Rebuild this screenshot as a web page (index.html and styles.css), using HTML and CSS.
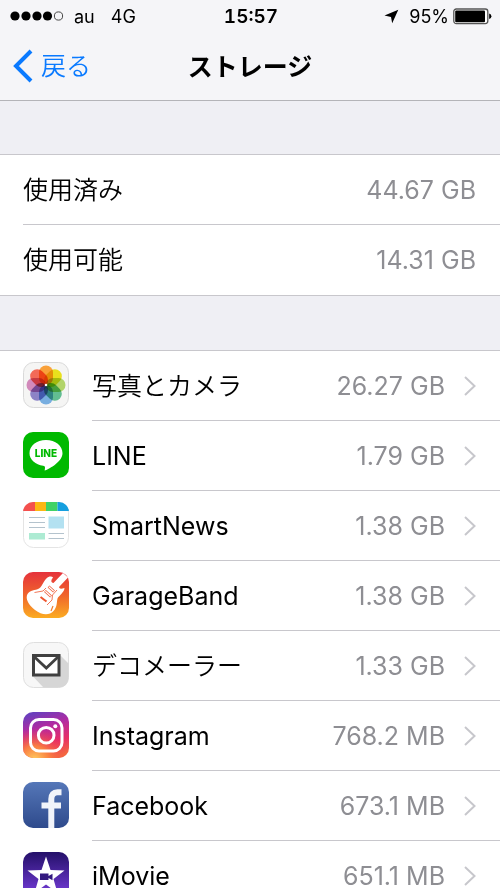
FILE: index.html
```html
<!DOCTYPE html>
<html lang="ja">
<head>
  <meta charset="UTF-8">
  <meta name="viewport" content="width=device-width, initial-scale=1.0">
  <title>ストレージ</title>
  <link rel="stylesheet" href="styles.css">
</head>
<body>

  <header class="header">
    <div class="status-bar">
      <div class="status-left">
        <svg class="signal" width="54" height="10" viewBox="0 0 54 10">
          <circle cx="5" cy="5" r="4.6"/>
          <circle cx="16" cy="5" r="4.6"/>
          <circle cx="27" cy="5" r="4.6"/>
          <circle cx="37.500" cy="5" r="4.6"/>
          <circle cx="48.500" cy="5" r="4.100" fill="none" stroke="#333" stroke-width="0.900"/>
        </svg>
        <span>au</span>
        <span>4G</span>
      </div>
      <div class="status-time">15:57</div>
      <div class="status-right">
        <svg width="15" height="15" viewBox="0 0 15 15">
          <path d="M14.300 0.700 L0.500 6.600 L7 7.900 L8.200 14.300 Z"/>
        </svg>
        <span>95%</span>
        <svg class="battery" width="39" height="17" viewBox="0 0 39 17">
          <rect x="0.800" y="1" width="34" height="14.600" rx="2.500" fill="#fff" stroke="#555" stroke-width="1.300"/>
          <rect x="2.200" y="2.400" width="29.800" height="11.800" rx="1"/>
          <path d="M36.200 5.500 Q38.400 6 38.400 8.300 Q38.400 10.600 36.200 11.100 Z"/>
        </svg>
      </div>
    </div>
    <nav class="nav-bar">
      <a href="#" class="back">
        <svg width="20" height="34" viewBox="0 0 20 34">
          <path d="M18 2 L3 17 L18 32" fill="none" stroke="#0a7aff" stroke-width="4"/>
        </svg>
        <span class="ja">戻る</span>
      </a>
      <h1 class="title">ストレージ</h1>
    </nav>
  </header>

  <main>
    <ul class="list summary">
      <li class="row"><span class="name ja">使用済み</span><span class="size">44.67 GB</span></li>
      <li class="row"><span class="name ja">使用可能</span><span class="size">14.31 GB</span></li>
    </ul>

    <ul class="list apps">
      <li>
        <a href="#" class="app">
          <svg class="icon" viewBox="0 0 46 46">
            <rect x="0.500" y="0.500" width="45" height="45" rx="10" fill="#f5f5f4" stroke="#d9d9d9"/>
            <g class="petals">
              <rect x="16" y="3.500" width="14" height="19.500" rx="7" fill="#f9a13a"/>
              <rect x="16" y="3.500" width="14" height="19.500" rx="7" fill="#e9e01d" transform="rotate(45 23 23)"/>
              <rect x="16" y="3.500" width="14" height="19.500" rx="7" fill="#b2d46a" transform="rotate(90 23 23)"/>
              <rect x="16" y="3.500" width="14" height="19.500" rx="7" fill="#62bd91" transform="rotate(135 23 23)"/>
              <rect x="16" y="3.500" width="14" height="19.500" rx="7" fill="#78aee0" transform="rotate(180 23 23)"/>
              <rect x="16" y="3.500" width="14" height="19.500" rx="7" fill="#8c83c6" transform="rotate(225 23 23)"/>
              <rect x="16" y="3.500" width="14" height="19.500" rx="7" fill="#d28abb" transform="rotate(270 23 23)"/>
              <rect x="16" y="3.500" width="14" height="19.500" rx="7" fill="#f36a58" transform="rotate(315 23 23)"/>
            </g>
            <circle cx="23" cy="23" r="1.300" fill="#fff"/>
          </svg>
          <span class="app-body"><span class="name ja">写真とカメラ</span><span class="size">26.27 GB</span><svg class="chevron" viewBox="0 0 14 22"><path d="M2 2 L11.500 11 L2 20"/></svg></span>
        </a>
      </li>
      <li>
        <a href="#" class="app">
          <svg class="icon" viewBox="0 0 46 46">
            <rect width="46" height="46" rx="10" fill="#00b900"/>
            <path d="M23 8 C13.500 8 6.500 13.800 6.500 21.200 C6.500 27.800 12.500 32.700 20.200 33.700 C22.300 34.200 22.300 35.200 21.600 38.600 C27 36.500 39.500 29.500 39.500 21.200 C39.500 13.800 32.500 8 23 8 Z" fill="#fff"/>
            <text x="23" y="25" class="line-text">LINE</text>
          </svg>
          <span class="app-body"><span class="name">LINE</span><span class="size">1.79 GB</span><svg class="chevron" viewBox="0 0 14 22"><path d="M2 2 L11.500 11 L2 20"/></svg></span>
        </a>
      </li>
      <li>
        <a href="#" class="app">
          <svg class="icon" viewBox="0 0 46 46">
            <defs>
              <clipPath id="round"><rect width="46" height="46" rx="10"/></clipPath>
            </defs>
            <rect x="0.500" y="0.500" width="45" height="45" rx="10" fill="#fff" stroke="#e4e4e4"/>
            <g clip-path="url(#round)">
              <rect width="12" height="9" fill="#f4504e"/>
              <rect x="12" width="11" height="9" fill="#fdb714"/>
              <rect x="23" width="11.500" height="9" fill="#41d266"/>
              <rect x="34.500" width="11.500" height="9" fill="#159fdf"/>
            </g>
            <path d="M6 15.500 H22 M6 20.500 H22 M6 25.500 H22 M25.500 31.500 H41 M25.500 36.500 H41" stroke="#b4c3cd" stroke-width="1"/>
            <rect x="25.500" y="14.500" width="15.500" height="12" fill="#b3e1f1"/>
            <rect x="6" y="31" width="16" height="6.500" fill="#adebd3"/>
          </svg>
          <span class="app-body"><span class="name">SmartNews</span><span class="size">1.38 GB</span><svg class="chevron" viewBox="0 0 14 22"><path d="M2 2 L11.500 11 L2 20"/></svg></span>
        </a>
      </li>
      <li>
        <a href="#" class="app">
          <svg class="icon" viewBox="0 0 46 46">
            <defs>
              <linearGradient id="garage" x1="0" y1="0" x2="0" y2="1">
                <stop offset="0" stop-color="#e5323c"/>
                <stop offset="0.500" stop-color="#f0642c"/>
                <stop offset="1" stop-color="#fbac22"/>
              </linearGradient>
            </defs>
            <rect width="46" height="46" rx="10" fill="url(#garage)"/>
            <path d="M40 1 L45 5.500 L36 15 C36.500 17.500 39 16.500 41.500 16 C41.500 20 36 23.500 34.500 26.500 C33.500 30 34.500 35 30.500 39 C26 44 18.500 43 12 38 C5.500 33 2 26.500 4.500 22 C7 18 12 18.500 16 16.500 C20 14.500 20.500 6.500 26.500 4.500 C27.500 4.300 29.500 4.500 30 5.500 C28 8 27.500 10.500 30.500 11 Z" fill="#fff"/>
            <path d="M11.500 20.500 L20 19 L23 16 M24 33 L29 28 L29.500 23 L34 18" fill="none" stroke="#ee5630" stroke-width="0.800"/>
            <path d="M17.500 25 L23.500 29.500" stroke="#ee5630" stroke-width="2"/>
            <path d="M22 19 L28 24.500 M25.500 14.500 L31 19.500" stroke="#ee5630" stroke-width="2.600"/>
            <path d="M22.300 19.300 L27.700 24.200 M25.800 14.800 L30.700 19.200" stroke="#fff" stroke-width="1.200"/>
            <path d="M28 39 L30 34" stroke="#f27c2b" stroke-width="1.200"/>
          </svg>
          <span class="app-body"><span class="name">GarageBand</span><span class="size">1.38 GB</span><svg class="chevron" viewBox="0 0 14 22"><path d="M2 2 L11.500 11 L2 20"/></svg></span>
        </a>
      </li>
      <li>
        <a href="#" class="app">
          <svg class="icon" viewBox="0 0 46 46">
            <rect x="0.500" y="0.500" width="45" height="45" rx="10" fill="#f7f7f7" stroke="#dedede"/>
            <path d="M37 13 L45.500 21.500 V36 Q45 45 36 45.500 H20.500 L9.500 34 Z" fill="#d6d6d6"/>
            <rect x="10.500" y="13.500" width="25.500" height="19.500" fill="#fff" stroke="#404040" stroke-width="3"/>
            <path d="M11 14.500 L23.300 26 L35.500 14.500" fill="none" stroke="#404040" stroke-width="2.800"/>
          </svg>
          <span class="app-body"><span class="name ja">デコメーラー</span><span class="size">1.33 GB</span><svg class="chevron" viewBox="0 0 14 22"><path d="M2 2 L11.500 11 L2 20"/></svg></span>
        </a>
      </li>
      <li>
        <a href="#" class="app">
          <svg class="icon" viewBox="0 0 46 46">
            <defs>
              <linearGradient id="insta" x1="0.300" y1="0" x2="0.600" y2="1">
                <stop offset="0" stop-color="#693fbd"/>
                <stop offset="0.350" stop-color="#b42aa0"/>
                <stop offset="0.700" stop-color="#e82e66"/>
                <stop offset="1" stop-color="#f4683f"/>
              </linearGradient>
              <radialGradient id="glow" cx="0.250" cy="1.050" r="0.700">
                <stop offset="0" stop-color="#ffd062"/>
                <stop offset="0.450" stop-color="#fb873f" stop-opacity="0.900"/>
                <stop offset="1" stop-color="#f04050" stop-opacity="0"/>
              </radialGradient>
            </defs>
            <rect width="46" height="46" rx="10" fill="url(#insta)"/>
            <rect width="46" height="46" rx="10" fill="url(#glow)"/>
            <rect x="7.500" y="7.500" width="31.500" height="31.500" rx="8.500" fill="none" stroke="#fff" stroke-width="3"/>
            <circle cx="23.200" cy="23.200" r="7.800" fill="none" stroke="#fff" stroke-width="3"/>
            <circle cx="32.300" cy="14.200" r="2" fill="#fff"/>
          </svg>
          <span class="app-body"><span class="name">Instagram</span><span class="size">768.2 MB</span><svg class="chevron" viewBox="0 0 14 22"><path d="M2 2 L11.500 11 L2 20"/></svg></span>
        </a>
      </li>
      <li>
        <a href="#" class="app">
          <svg class="icon" viewBox="0 0 46 46">
            <defs>
              <linearGradient id="fb" x1="0" y1="0" x2="0" y2="1">
                <stop offset="0" stop-color="#5577b8"/>
                <stop offset="1" stop-color="#2e4a8c"/>
              </linearGradient>
            </defs>
            <rect width="46" height="46" rx="10" fill="url(#fb)"/>
            <path d="M28.300 46 V17 Q28.300 10.200 34.500 10.200 H38.500 M18.500 23.500 H38" fill="none" stroke="#f1f4fa" stroke-width="6"/>
          </svg>
          <span class="app-body"><span class="name">Facebook</span><span class="size">673.1 MB</span><svg class="chevron" viewBox="0 0 14 22"><path d="M2 2 L11.500 11 L2 20"/></svg></span>
        </a>
      </li>
      <li>
        <a href="#" class="app">
          <svg class="icon" viewBox="0 0 46 46">
            <defs>
              <linearGradient id="movie" x1="0" y1="0" x2="0" y2="1">
                <stop offset="0" stop-color="#241069"/>
                <stop offset="1" stop-color="#7a3fe0"/>
              </linearGradient>
            </defs>
            <rect width="46" height="46" rx="10" fill="url(#movie)"/>
            <path d="M23 4.500 L27.500 18 L41.500 18.500 L30.500 27 L34.500 41 L23 32.500 L11.500 41 L15.500 27 L4.500 18.500 L18.500 18 Z" fill="#fff"/>
            <path d="M17 21.500 H25.500 V24 L29.500 21.800 V28.200 L25.500 26 V28 H17 Z" fill="#33197f"/>
          </svg>
          <span class="app-body"><span class="name">iMovie</span><span class="size">651.1 MB</span><svg class="chevron" viewBox="0 0 14 22"><path d="M2 2 L11.500 11 L2 20"/></svg></span>
        </a>
      </li>
    </ul>
  </main>

</body>
</html>
```

FILE: styles.css
```css
* {
  box-sizing: border-box;
}

body {
  margin: 0;
  background-color: #efeff4;
  color: #000;
  font-family: Inter, "Noto Sans CJK JP", sans-serif;
  font-size: 25px;
}

a {
  text-decoration: none;
  color: inherit;
}

svg {
  display: block;
  flex: none;
}

.header {
  background-color: #f5f5f8;
  border-bottom: 1px solid #b4b4b8;
}

.status-bar {
  display: grid;
  grid-template-columns: 1fr auto 1fr;
  align-items: center;
  height: 32px;
  padding: 0 8px 0 10px;
  font-size: 18px;
}

.status-left,
.status-right {
  display: flex;
  align-items: center;
}

.status-left {
  gap: 16px;
}

.signal {
  margin-right: -6px;
}

.status-time {
  font-size: 19px;
  font-weight: 600;
  font-variant-numeric: tabular-nums;
}

.status-right {
  justify-content: flex-end;
  gap: 10px;
}

.battery {
  margin-left: -6px;
}

.nav-bar {
  display: grid;
  grid-template-columns: 1fr auto 1fr;
  align-items: center;
  height: 68px;
  padding: 0 13px;
}

.back {
  display: flex;
  align-items: center;
  gap: 8px;
  color: #0a7aff;
}

.title {
  margin: 0;
  padding-bottom: 3px;
  font-size: 25px;
  font-weight: 700;
}

.list {
  list-style: none;
  margin: 0;
  padding: 0;
  background-color: #fff;
  border-top: 1px solid #c8c7cc;
}

.summary {
  margin-top: 53px;
  padding-left: 23px;
  border-bottom: 1px solid #c8c7cc;
}

.apps {
  margin-top: 54px;
}

.row,
.app-body {
  display: flex;
  align-items: center;
  height: 70px;
  border-bottom: 1px solid #c8c7cc;
}

.row {
  padding-right: 24px;
}

.row:last-child {
  border-bottom: none;
}

.app {
  display: flex;
  align-items: center;
  padding-left: 23px;
  gap: 23px;
}

.app-body {
  flex: 1;
  padding-right: 23px;
}

.icon {
  width: 46px;
  height: 46px;
  margin-bottom: 2px;
}

.name {
  flex: 1;
}

/* CJK glyphs sit low in the line box */
.ja {
  padding-bottom: 4px;
  font-weight: 350;
}

.size {
  color: #8e8e93;
  font-weight: 400;
}

.chevron {
  width: 14px;
  height: 22px;
  margin-left: 18px;
  fill: none;
  stroke: #c7c7cc;
  stroke-width: 2;
}

.petals {
  isolation: isolate;
}

.petals rect {
  mix-blend-mode: multiply;
}

.line-text {
  fill: #00b900;
  font-size: 10px;
  font-weight: 800;
  text-anchor: middle;
}
```
